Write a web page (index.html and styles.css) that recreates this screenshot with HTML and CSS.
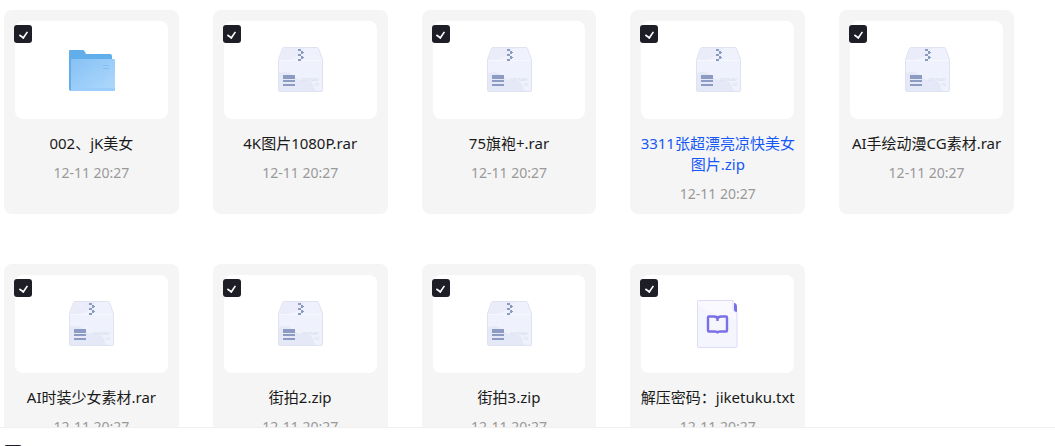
FILE: index.html
```html
<!DOCTYPE html>
<html lang="zh-CN">
<head>
    <meta charset="UTF-8">
    <meta name="viewport" content="width=device-width, initial-scale=1.0">
    <title>文件列表</title>
    <link rel="stylesheet" href="styles.css">
</head>
<body>

    <!-- Iconos compartidos -->
    <svg class="sprite" aria-hidden="true">
        <defs>
            <linearGradient id="folder-fill" x1="0" y1="0" x2="1" y2="1">
                <stop offset="0" stop-color="#86c1f4"/>
                <stop offset="1" stop-color="#afd9fd"/>
            </linearGradient>
        </defs>

        <symbol id="icon-folder" viewBox="0 -1 48 48">
            <path d="M2 4q0-1 1-1h13q1 0 2 2l1 2h24q2 0 2 2v35H4q-2 0-2-2z" fill="#62aeeb"/>
            <path d="M5 12h42q1 0 1 1v30q0 1-1 1H4V13q0-1 1-1z" fill="url(#folder-fill)"/>
            <path d="M4 41h44v2q0 1-1 1H4z" fill="#9bcefa"/>
            <path d="M36 18.500h6M36 21.500h6" stroke="#83bef3" stroke-width="1"/>
        </symbol>

        <symbol id="icon-zip" viewBox="-1 0 48 48">
            <path d="M7 1.500h33q1 0 1.500 1l4 11V44q0 1.500-1.500 1.500H3Q1.500 45.500 1.500 44V13.500l4-11Q6 1.500 7 1.500z" fill="#eff2fc"/>
            <path d="M7 2h21q-8 13-26 12.500z" fill="#eaedf9"/>
            <path d="M2 27q9-3 13 2t12 5 9 5 4 6H3q-1 0-1-1z" fill="#e5e9f7"/>
            <path d="M2 14.500h43" stroke="#f6f8fe" stroke-width="1"/>
            <path d="M7 1.500h33q1 0 1.500 1l4 11V44q0 1.500-1.500 1.500H3Q1.500 45.500 1.500 44V13.500l4-11Q6 1.500 7 1.500z" fill="none" stroke="#dfe3f1" stroke-width="1"/>
            <path d="M21 3h3v2h-3zM24 5h2v3h-2zM21 8h3v2h-3zM24 10h2v3h-2zM21 13h3v2h-3zM26 6h1v1h-1zM26 11h1v1h-1z" fill="#8a9bc2"/>
            <path d="M6 29h12v4H6zM6 34h12v2H6zM6 38h12v2H6z" fill="#8b9bc2"/>
            <text x="42" y="35" class="zip-text">ZIP/RAR/</text>
            <text x="42" y="40" class="zip-text">...7Z</text>
        </symbol>

        <symbol id="icon-txt" viewBox="-1 0 48 48">
            <path d="M5 .5h34v8q0 3 4 4V46q0 1.500-1.500 1.500H5Q3.500 47.500 3.500 46V2Q3.500.5 5 .5z" transform="translate(-1 0)" fill="#f5f5fe" stroke="#dddafa" stroke-width="1"/>
            <path d="M4 1h33v8l4 5v6Q17 15 3 5V2q0-1 1-1z" fill="#f9f9ff"/>
            <path d="M39 3q3 0 3 4v5q-3 0-3-3z" fill="#7a70e6"/>
            <path d="M14 16.500h5q3 0 3.500 2.500Q23 16.500 26 16.500h5q1 0 1 1v13q0 1-1 1h-6q-2 0-2.500 1Q22 31.500 20 31.500h-6q-1 0-1-1v-13q0-1 1-1zM22.500 17v4" fill="none" stroke="#7a70e6" stroke-width="2.400" stroke-linejoin="round"/>
        </symbol>
    </svg>

    <main class="file-list">
        <article class="card">
            <div class="thumb">
                <input class="check" type="checkbox" aria-label="002、jK美女" checked>
                <svg class="icon"><use href="#icon-folder"/></svg>
            </div>
            <h2 class="name">002、jK美女</h2>
            <p class="date">12-11 20:27</p>
        </article>

        <article class="card">
            <div class="thumb">
                <input class="check" type="checkbox" aria-label="4K图片1080P.rar" checked>
                <svg class="icon"><use href="#icon-zip"/></svg>
            </div>
            <h2 class="name">4K图片1080P.rar</h2>
            <p class="date">12-11 20:27</p>
        </article>

        <article class="card">
            <div class="thumb">
                <input class="check" type="checkbox" aria-label="75旗袍+.rar" checked>
                <svg class="icon"><use href="#icon-zip"/></svg>
            </div>
            <h2 class="name">75旗袍+.rar</h2>
            <p class="date">12-11 20:27</p>
        </article>

        <article class="card">
            <div class="thumb">
                <input class="check" type="checkbox" aria-label="3311张超漂亮凉快美女图片.zip" checked>
                <svg class="icon"><use href="#icon-zip"/></svg>
            </div>
            <h2 class="name active">3311张超漂亮凉快美女图片.zip</h2>
            <p class="date">12-11 20:27</p>
        </article>

        <article class="card">
            <div class="thumb">
                <input class="check" type="checkbox" aria-label="AI手绘动漫CG素材.rar" checked>
                <svg class="icon"><use href="#icon-zip"/></svg>
            </div>
            <h2 class="name">AI手绘动漫CG素材.rar</h2>
            <p class="date">12-11 20:27</p>
        </article>

        <article class="card">
            <div class="thumb">
                <input class="check" type="checkbox" aria-label="AI时装少女素材.rar" checked>
                <svg class="icon"><use href="#icon-zip"/></svg>
            </div>
            <h2 class="name">AI时装少女素材.rar</h2>
            <p class="date">12-11 20:27</p>
        </article>

        <article class="card">
            <div class="thumb">
                <input class="check" type="checkbox" aria-label="街拍2.zip" checked>
                <svg class="icon"><use href="#icon-zip"/></svg>
            </div>
            <h2 class="name">街拍2.zip</h2>
            <p class="date">12-11 20:27</p>
        </article>

        <article class="card">
            <div class="thumb">
                <input class="check" type="checkbox" aria-label="街拍3.zip" checked>
                <svg class="icon"><use href="#icon-zip"/></svg>
            </div>
            <h2 class="name">街拍3.zip</h2>
            <p class="date">12-11 20:27</p>
        </article>

        <article class="card">
            <div class="thumb">
                <input class="check" type="checkbox" aria-label="解压密码：jiketuku.txt" checked>
                <svg class="icon"><use href="#icon-txt"/></svg>
            </div>
            <h2 class="name">解压密码：jiketuku.txt</h2>
            <p class="date">12-11 20:27</p>
        </article>
    </main>

    <footer class="bottom-bar">
        <input class="check" type="checkbox" aria-label="全选" checked>
    </footer>

</body>
</html>
```
FILE: styles.css
```css
* {
    box-sizing: border-box;
    font-family: "Noto Sans", "Noto Sans CJK SC", sans-serif;
}

body {
    display: flex;
    flex-direction: column;
    height: 100vh;
    margin: 0;
    overflow: hidden;
    background-color: #fff;
}

.sprite {
    position: absolute;
    width: 0;
    height: 0;
}

.file-list {
    flex: 1;
    min-height: 0;
    overflow: hidden;
    display: grid;
    grid-template-columns: repeat(5, 1fr);
    grid-auto-rows: max-content;
    align-content: start;
    gap: 50px 34px;
    padding: 10px 41px 0 4px;
}

.card {
    min-width: 0;
    min-height: 204px;
    padding: 11px 8px 8px;
    border-radius: 8px;
    text-align: center;
    background-color: #f5f5f5;
}

.thumb {
    position: relative;
    display: flex;
    align-items: center;
    justify-content: center;
    height: 98px;
    margin: 0 3px;
    border-radius: 8px;
    background-color: #fff;
}

.icon {
    width: 48px;
    height: 48px;
}

.zip-text {
    font-size: 4px;
    font-weight: bold;
    text-anchor: end;
    fill: #dce1f0;
}

.name {
    margin: 14px 0 0;
    font-size: 15px;
    font-weight: 400;
    line-height: 21px;
    color: #1a1a1a;
}

.name.active {
    color: #1558f5;
}

.date {
    margin: 8px 0 0;
    font-size: 14px;
    line-height: 21px;
    color: #999;
}

.check {
    appearance: none;
    display: grid;
    place-items: center;
    width: 18px;
    height: 18px;
    margin: 0;
    border-radius: 3px;
    background-color: #1e1f26;
}

/* marca del checkbox */
.check::before {
    content: "";
    width: 5px;
    height: 8px;
    margin-bottom: 1px;
    border: solid #fff;
    border-width: 0 2px 2px 0;
    transform: rotate(35deg) scale(.8);
}

.thumb .check {
    position: absolute;
    top: 4px;
    left: -1px;
}

.bottom-bar {
    flex: none;
    height: 19px;
    padding: 17px 4px 0;
    border-top: 1px solid #f0f0f0;
    overflow: hidden;
    background-color: #fff;
}
```
